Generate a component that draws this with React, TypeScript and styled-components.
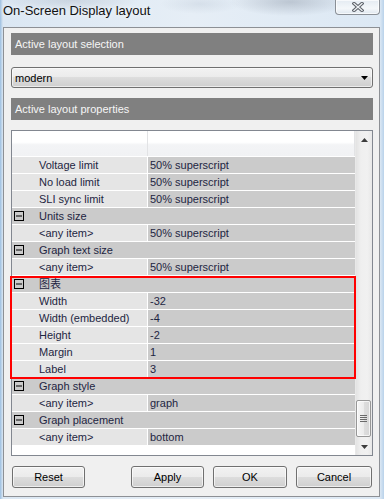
import React from "react";
import styled, { createGlobalStyle } from "styled-components";

const GlobalStyle = createGlobalStyle`
  html, body {
    margin: 0;
    padding: 0;
    width: 384px;
    height: 499px;
    overflow: hidden;
  }
  body {
    font-family: "Liberation Sans", "Noto Sans CJK SC", Arial, sans-serif;
    font-size: 11px;
    color: #1e2542;
  }
`

const Window = styled.div`
  width: 384px;
  height: 499px;
  box-sizing: border-box;
  padding: 0 4px 2px 3px;
  display: flex;
  flex-direction: column;
  background:
    radial-gradient(ellipse 60px 14px at 290px 2px, rgba(120, 130, 145, 0.35), transparent),
    radial-gradient(ellipse 70px 12px at 70px 0px, rgba(140, 150, 165, 0.25), transparent),
    radial-gradient(ellipse 40px 10px at 200px 4px, rgba(150, 165, 185, 0.2), transparent),
    linear-gradient(to right, #9dbfe0 0px, #dbe7f3 3px, #e6eef6 50%, #dce8f4 380px, #b9d2ea 384px);
`

const TitleBar = styled.div`
  height: 27px;
  display: flex;
  justify-content: space-between;
  align-items: flex-start;
`

const Title = styled.span`
  font-size: 13px;
  color: #111;
  line-height: 15px;
  padding-top: 3px;
  text-shadow: 0 0 6px rgba(255, 255, 255, 0.9);
`

const CloseButton = styled.div`
  width: 45px;
  height: 15px;
  box-sizing: border-box;
  border: 1px solid #8a8f96;
  border-top: none;
  border-radius: 0 0 4px 4px;
  background: linear-gradient(to bottom, #e4ebf2, #f4f7fa 60%, #dfe7ef);
  box-shadow: inset 0 0 0 1px rgba(255, 255, 255, 0.7);
  display: flex;
  align-items: center;
  justify-content: center;
`

const Client = styled.div`
  flex: 1;
  background: #f0f0f0;
  border: 1px solid #8d9095;
  padding: 5px 6px 8px 7px;
  display: flex;
  flex-direction: column;
`

const SectionHeader = styled.div<{ $gap?: number }>`
  height: 22px;
  line-height: 22px;
  background: #808080;
  color: #f6f6f6;
  padding-left: 4px;
  margin-top: ${p => p.$gap ?? 0}px;
`

const Combo = styled.div`
  margin-top: 12px;
  height: 21px;
  box-sizing: border-box;
  border: 1px solid #707070;
  border-radius: 3px;
  background: linear-gradient(to bottom, #f2f2f2 0%, #ebebeb 50%, #dddddd 50%, #cfcfcf 100%);
  box-shadow: inset 0 0 0 1px rgba(255, 255, 255, 0.6);
  display: flex;
  align-items: center;
  justify-content: space-between;
  padding: 0 4px 0 3px;
  color: #000;
`

const ListBox = styled.div`
  position: relative;
  margin-top: 10px;
  height: 326px;
  box-sizing: border-box;
  border: 1px solid #828790;
  background: #fff;
  display: flex;
`

const ListContent = styled.div`
  width: 343px;
  display: flex;
  flex-direction: column;
`

const ListHeader = styled.div`
  height: 25px;
  display: grid;
  grid-template-columns: 136px 1fr;
  background: linear-gradient(to bottom, #ffffff 0%, #ffffff 45%, #f3f4f6 55%, #f1f2f4 100%);
  border-right: 1px solid #e2e3e5;
  > div:first-child {
    border-right: 1px solid #e2e3e5;
  }
`

const Row = styled.div<{ $group?: boolean }>`
  height: 16px;
  border-top: 1px solid #fff;
  display: grid;
  grid-template-columns: ${p => (p.$group ? "1fr" : "136px 1fr")};
  line-height: 16px;
  background: #cbcbcb;
`

const NameCell = styled.div`
  background: #e5e5e5;
  border-right: 1px solid #fff;
  padding-left: 27px;
  white-space: nowrap;
`

const ValueCell = styled.div`
  padding-left: 2px;
  white-space: nowrap;
`

const GroupCell = styled.div`
  display: flex;
  align-items: center;
  padding-left: 2px;
  gap: 15px;
  white-space: nowrap;
`

const Highlight = styled.div`
  position: absolute;
  left: -2px;
  top: 145px;
  width: 346px;
  height: 103px;
  box-sizing: border-box;
  border: 2px solid #ff0000;
  pointer-events: none;
`

const ScrollBar = styled.div`
  width: 17px;
  display: flex;
  flex-direction: column;
  background: linear-gradient(to right, #e3e3e3, #efefef 30%, #f1f1f1 70%, #e8e8e8);
  border-left: 1px solid #e8e8e8;
  box-sizing: border-box;
`

const ScrollArrow = styled.div`
  height: 17px;
  display: flex;
  align-items: center;
  justify-content: center;
`

const ScrollSpacer = styled.div`
  flex: 1;
`

const Thumb = styled.div`
  height: 37px;
  margin: 0 1px 1px 0;
  box-sizing: border-box;
  border: 1px solid #979797;
  border-radius: 2px;
  background: linear-gradient(to right, #f6f6f6, #ececec 50%, #dedede 51%, #d6d6d6);
  box-shadow: inset 0 0 0 1px rgba(255, 255, 255, 0.7);
  display: flex;
  align-items: center;
  justify-content: center;
`

const ButtonRow = styled.div`
  margin-top: 10px;
  display: flex;
  gap: 9px;
  padding: 0 1px;
  > :first-child {
    margin-right: auto;
  }
`

const Button = styled.div<{ $w: number }>`
  width: ${p => p.$w}px;
  height: 22px;
  box-sizing: border-box;
  border: 1px solid #707070;
  border-radius: 3px;
  background: linear-gradient(to bottom, #f2f2f2 0%, #ebebeb 50%, #dddddd 50%, #cfcfcf 100%);
  box-shadow: inset 0 0 0 1px rgba(255, 255, 255, 0.65);
  display: flex;
  align-items: center;
  justify-content: center;
  color: #000;
`

const CloseGlyph = () => (
  <svg width="12" height="10" viewBox="0 0 12 10">
    <path d="M2 1.5 L10 8.5 M10 1.5 L2 8.5" stroke="#5b6068" strokeWidth="3.4" strokeLinecap="square" />
    <path d="M2 1.5 L10 8.5 M10 1.5 L2 8.5" stroke="#eef1f4" strokeWidth="1.3" strokeLinecap="square" />
  </svg>
)

const Triangle = ({ up, color = "#000" }: { up?: boolean; color?: string }) => (
  <svg width="7" height="4" viewBox="0 0 7 4">
    <path d={up ? "M0 4 L3.5 0 L7 4 Z" : "M0 0 L7 0 L3.5 4 Z"} fill={color} />
  </svg>
)

const MinusBox = () => (
  <svg width="10" height="10" viewBox="0 0 10 10">
    <rect x="0.5" y="0.5" width="9" height="9" fill="none" stroke="#000" />
    <path d="M2 5 H8" stroke="#000" />
  </svg>
)

const Grip = () => (
  <svg width="7" height="7" viewBox="0 0 7 7">
    <path d="M0 0.5 H7 M0 2.5 H7 M0 4.5 H7 M0 6.5 H7" stroke="#6a6a6a" strokeWidth="1" />
  </svg>
)

type Item = { group?: string; name?: string; value?: string };

const items: Item[] = [
  { name: "Voltage limit", value: "50% superscript" },
  { name: "No load limit", value: "50% superscript" },
  { name: "SLI sync limit", value: "50% superscript" },
  { group: "Units size" },
  { name: "<any item>", value: "50% superscript" },
  { group: "Graph text size" },
  { name: "<any item>", value: "50% superscript" },
  { group: "图表" },
  { name: "Width", value: "-32" },
  { name: "Width (embedded)", value: "-4" },
  { name: "Height", value: "-2" },
  { name: "Margin", value: "1" },
  { name: "Label", value: "3" },
  { group: "Graph style" },
  { name: "<any item>", value: "graph" },
  { group: "Graph placement" },
  { name: "<any item>", value: "bottom" },
];

export default function App() {
  return (
    <Window>
      <GlobalStyle />
      <TitleBar>
        <Title>On-Screen Display layout</Title>
        <CloseButton>
          <CloseGlyph />
        </CloseButton>
      </TitleBar>
      <Client>
        <SectionHeader>Active layout selection</SectionHeader>
        <Combo>
          <span>modern</span>
          <Triangle />
        </Combo>
        <SectionHeader $gap={10}>Active layout properties</SectionHeader>
        <ListBox>
          <ListContent>
            <ListHeader>
              <div />
              <div />
            </ListHeader>
            {items.map((it, i) =>
              it.group ? (
                <Row key={i} $group>
                  <GroupCell>
                    <MinusBox />
                    <span>{it.group}</span>
                  </GroupCell>
                </Row>
              ) : (
                <Row key={i}>
                  <NameCell>{it.name}</NameCell>
                  <ValueCell>{it.value}</ValueCell>
                </Row>
              )
            )}
          </ListContent>
          <ScrollBar>
            <ScrollArrow>
              <Triangle up color="#3c3c3c" />
            </ScrollArrow>
            <ScrollSpacer />
            <Thumb>
              <Grip />
            </Thumb>
            <ScrollArrow>
              <Triangle color="#3c3c3c" />
            </ScrollArrow>
          </ScrollBar>
          <Highlight />
        </ListBox>
        <ButtonRow>
          <Button $w={73}>Reset</Button>
          <Button $w={73}>Apply</Button>
          <Button $w={74}>OK</Button>
          <Button $w={76}>Cancel</Button>
        </ButtonRow>
      </Client>
    </Window>
  );
}
